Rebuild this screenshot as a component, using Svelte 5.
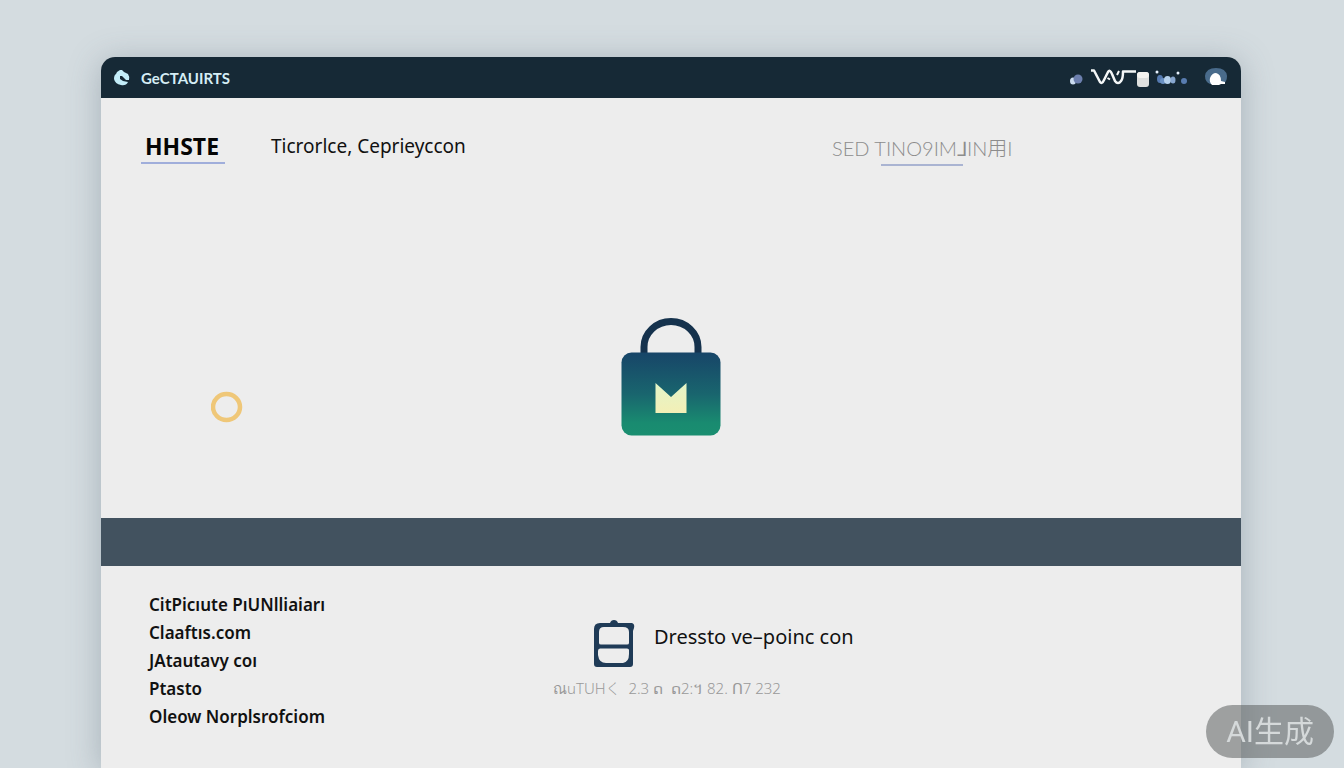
<script lang="ts">
	const links = [
		'CitPicıute PıUNlliaiarı',
		'Claaftıs.com',
		'JAtautavy coı',
		'Ptasto',
		'Oleow Norplsrofciom'
	];
</script>

<div class="page">
	<div class="window">
		<header class="topbar">
			<a class="brand" href="/">
				<svg width="16" height="16" viewBox="0 0 16 16" aria-hidden="true">
					<path d="M6 0 L8 0 L10 2 L14 4 Q16 7 15 10 L12 10 L8 6 L6 6 L6 9 L9 11 L14 12 Q12 16 7 15 Q1 14 0 9 Q0 5 2 4 L3 2 Z" fill="#c3edf9" />
				</svg>
				<span>GeCTAUIRTS</span>
			</a>
			<div class="status">
				<svg width="120" height="22" viewBox="0 0 120 22" aria-hidden="true">
					<ellipse cx="3" cy="14" rx="3" ry="3.5" fill="#cbdcf0" />
					<circle cx="8" cy="12" r="4.5" fill="#6c7fae" />
					<path d="M21 3.5 H24 L30 15 Q32 17.5 34 13 L38 5 Q40 2 42 7 L45 14 Q48 18 51 14 Q53 12 53 4.5 H66" fill="none" stroke="#f4f7f8" stroke-width="2.5" stroke-linejoin="round" />
					<path d="M37.5 11 L40 12.5 M47 8 L49 4" stroke="#f4f7f8" stroke-width="2" />
					<rect x="67" y="5" width="12" height="15" rx="3" fill="#dfe0df" />
					<rect x="67" y="5" width="12" height="6" rx="3" fill="#f5f4f1" />
					<circle cx="87" cy="5" r="1.5" fill="#e8f3ff" />
					<circle cx="108" cy="6" r="1.5" fill="#e8f3ff" />
					<ellipse cx="90" cy="12" rx="3" ry="4" fill="#557ab1" />
					<circle cx="93" cy="14" r="3" fill="#6a91c3" />
					<ellipse cx="97.5" cy="13" rx="3.5" ry="4" fill="#b6d2ee" />
					<ellipse cx="103" cy="13" rx="2.5" ry="3.5" fill="#88a7d0" />
					<circle cx="114" cy="14" r="3" fill="#587cb0" />
				</svg>
				<button class="avatar" aria-label="Account">
					<svg width="22" height="20" viewBox="0 0 22 20" aria-hidden="true">
						<path d="M5 16 Q0 14 0 8 Q1 0 11 0 Q21 0 22 8 Q22 14 18 16 Z" fill="#496b8b" />
						<path d="M7 17 Q4 14 5 10 Q7 5 11 5 Q16 6 16 13 L20 14 V16 H16 L14 17 Z" fill="#fff" />
					</svg>
				</button>
			</div>
		</header>

		<main class="hero">
			<nav class="tabs">
				<a class="tab active" href="#home">HHSTE</a>
				<a class="tab" href="#about">Ticrorlce, Ceprieyccon</a>
				<a class="tab faint" href="#more">SED TINO9IM⅃IN用I</a>
			</nav>
			<div class="stage">
				<svg class="ring" width="32" height="32" viewBox="0 0 32 32" aria-hidden="true">
					<ellipse cx="15.5" cy="16" rx="13.5" ry="13" fill="none" stroke="#efc778" stroke-width="4.5" />
				</svg>
				<svg class="bag" width="100" height="118" viewBox="0 0 100 118" aria-hidden="true">
					<defs>
						<linearGradient id="bag-fill" x1="0" y1="0" x2="0" y2="1">
							<stop offset="0" stop-color="#174568" />
							<stop offset="0.5" stop-color="#19656e" />
							<stop offset="0.85" stop-color="#198b70" />
							<stop offset="1" stop-color="#1a8e70" />
						</linearGradient>
						<linearGradient id="mark-fill" x1="0" y1="0" x2="0" y2="1">
							<stop offset="0" stop-color="#e2f5c8" />
							<stop offset="1" stop-color="#f3efb6" />
						</linearGradient>
					</defs>
					<path d="M23 37 V29 A27 25.5 0 0 1 77 29 V37" fill="none" stroke="#15324d" stroke-width="7" />
					<rect x="0.5" y="34.5" width="99" height="83" rx="10" fill="url(#bag-fill)" />
					<path d="M34.5 65 L50 79 L65.5 65 V95 H34.5 Z" fill="url(#mark-fill)" />
				</svg>
			</div>
		</main>

		<div class="band"></div>

		<footer class="footer">
			<ul class="links">
				{#each links as link}
					<li><a href="#info">{link}</a></li>
				{/each}
			</ul>
			<div class="contact">
				<div class="contact-title">
					<svg width="42" height="48" viewBox="0 0 42 48" aria-hidden="true">
						<path fill-rule="evenodd" fill="#1f3b57" d="M7 3 H17 Q18 0 21 0 Q24 0 25 3 H39 Q42 4 41 8 L40 11 V44 Q40 47 37 47 H4 Q1 47 1 44 V9 Q1 3 7 3 Z M11 7 Q6 7 6 12 V23 Q6 24.5 8 24.5 H34 Q36 24.5 36 23 V12 Q36 7 30 7 Z M7 28.5 Q5 28.5 5 31 V35 Q6 43 13 43 H30 Q36 42 36 34 V30 Q36 28.5 34 28.5 Z" />
					</svg>
					<span>Dressto ve–poinc con</span>
				</div>
				<p class="contact-note">ณuTUHく&nbsp; 2.3 ດ&nbsp; ດ2:។ 82. ꓵ7 232</p>
			</div>
		</footer>
	</div>

	<div class="watermark">AI生成</div>
</div>

<style>
	:global(body) {
		background: #d4dce0;
	}

	.page {
		display: flex;
		box-sizing: border-box;
		min-height: 100vh;
		padding: 57px 103px 0 101px;
		font-family: "Noto Sans", "Noto Sans CJK SC", sans-serif;
		color: #111;
	}

	.window {
		flex: 1;
		display: flex;
		flex-direction: column;
		border-radius: 14px 14px 0 0;
		overflow: hidden;
		background: #ededed;
		box-shadow: 0 4px 32px rgba(80, 98, 112, 0.35);
	}

	a {
		color: inherit;
		text-decoration: none;
	}

	.topbar {
		display: flex;
		align-items: center;
		justify-content: space-between;
		height: 41px;
		padding: 0 14px 0 13px;
		background: #162936;
	}

	.brand {
		display: flex;
		align-items: center;
		gap: 11px;
		color: #d5edf5;
		font-family: Lato, sans-serif;
		font-size: 15px;
		font-weight: 700;
	}

	.status {
		display: flex;
		align-items: center;
		gap: 15px;
	}

	.avatar {
		display: flex;
		padding: 0;
		border: none;
		background: none;
		cursor: pointer;
	}

	.hero {
		display: flex;
		flex-direction: column;
	}

	.tabs {
		display: grid;
		grid-template-columns: 130px 561px 1fr;
		align-items: start;
		padding: 32px 40px 0;
	}

	.tab {
		justify-self: start;
		font-size: 19px;
		line-height: 32px;
	}

	.tab.active {
		border-bottom: 2px solid #a0aedb;
		padding: 0 6px 0 4px;
		color: #050505;
		font-size: 23px;
		font-weight: 700;
	}

	.tab.faint {
		display: flex;
		flex-direction: column;
		align-items: center;
		padding-top: 2px;
		color: #8c8c8c;
		font-family: Lato, "Noto Sans CJK SC", sans-serif;
		font-size: 20px;
		font-weight: 300;
	}

	.tab.faint::after {
		content: "";
		width: 82px;
		height: 2px;
		background: #aab4d2;
	}

	.stage {
		display: grid;
		grid-template-columns: 1fr auto 1fr;
		align-items: end;
		padding: 152px 110px 82px;
	}

	.ring {
		margin-bottom: 13px;
	}

	.band {
		height: 48px;
		background: #42525f;
	}

	.footer {
		display: grid;
		grid-template-columns: 404px 1fr;
		padding: 25px 48px 32px;
	}

	.links {
		margin: 0;
		padding: 0;
		list-style: none;
		font-size: 17px;
		font-weight: 600;
		line-height: 28px;
	}

	.contact {
		padding-top: 29px;
	}

	.contact-title {
		display: flex;
		align-items: center;
		gap: 19px;
		padding-left: 40px;
		font-size: 20px;
	}

	.contact-title span {
		padding-bottom: 16px;
	}

	.contact-note {
		margin: 8px 0 0;
		color: #999;
		font-size: 15px;
		font-weight: 300;
		line-height: 24px;
	}

	.watermark {
		position: fixed;
		right: 10px;
		bottom: 10px;
		padding: 0 20px;
		border-radius: 27px;
		background: rgba(92, 96, 97, 0.55);
		color: #d5d9da;
		font-family: Roboto, "Noto Sans CJK SC", sans-serif;
		font-size: 30px;
		line-height: 53px;
	}
</style>
